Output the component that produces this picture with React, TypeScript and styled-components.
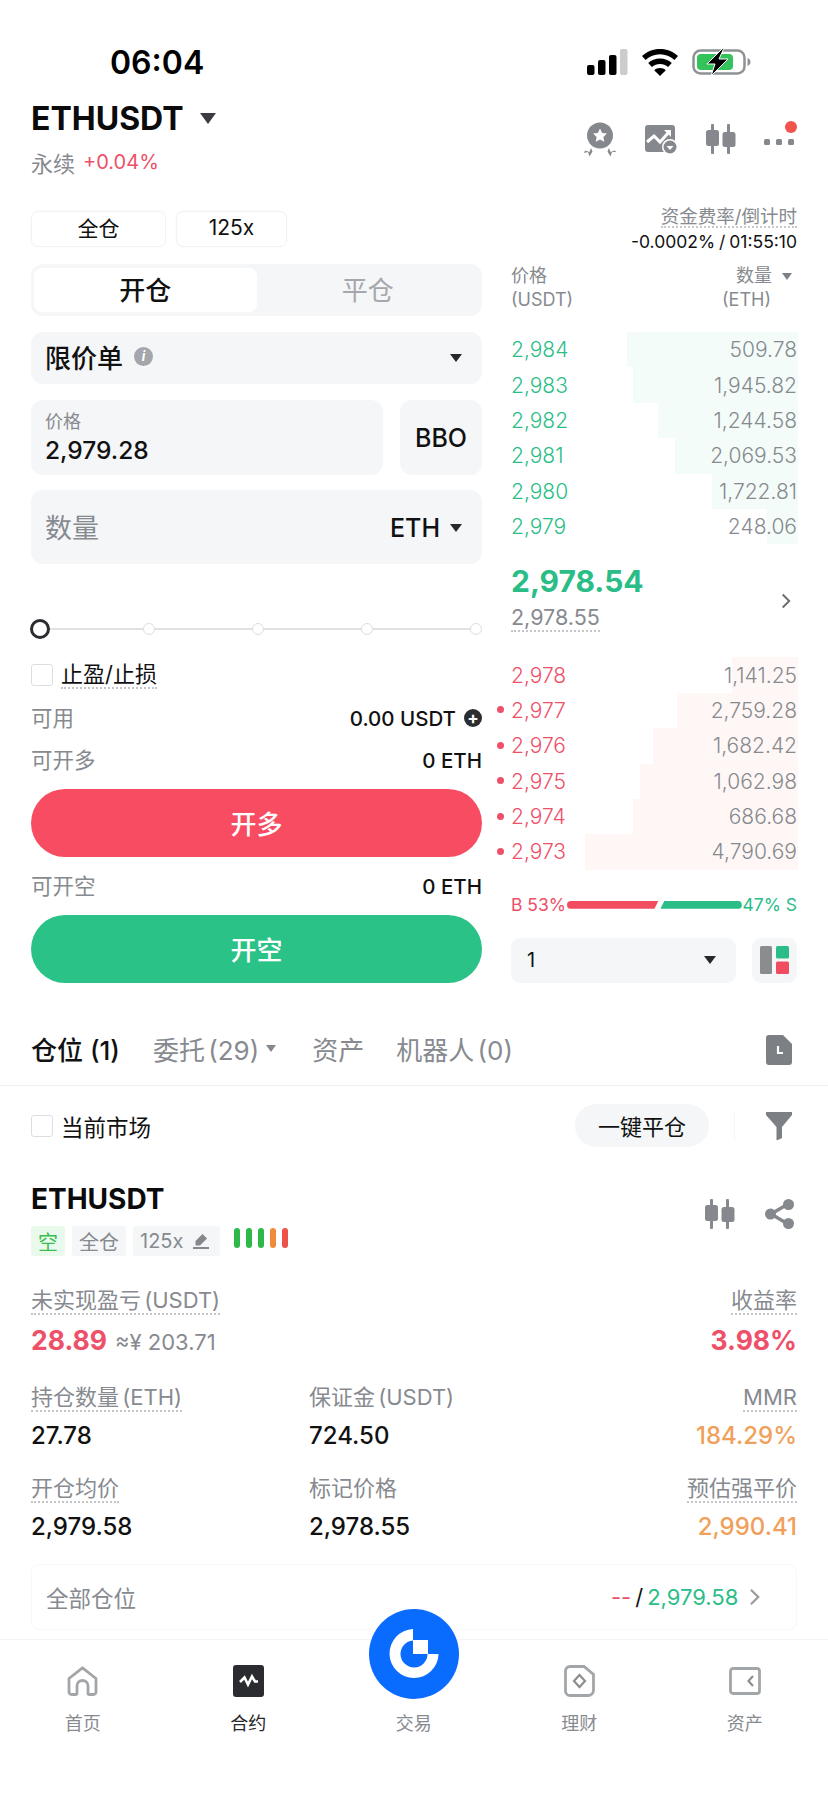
import React from 'react';
import styled, { createGlobalStyle } from 'styled-components';

const GREEN = '#2bbd87';
const RED = '#ee4f69';
const GREY = '#878a8f';
const FIELD = '#f4f6f8';
const ICON = '#85888c';

const GlobalStyle = createGlobalStyle`
  html, body {
    margin: 0;
    padding: 0;
    background: #fff;
  }
  body {
    font-family: Inter, "Noto Sans CJK SC", sans-serif;
    color: #111;
  }
  * { box-sizing: border-box; }
`;

const Page = styled.div`
  width: 828px;
  height: 1800px;
  padding: 0 31px;
  overflow: hidden;
`;

/* status bar */
const StatusBar = styled.div`
  display: flex;
  justify-content: space-between;
  align-items: center;
  height: 36px;
  margin: 44px -31px 0;
  padding: 0 76px 0 110px;
`;
const Time = styled.div`
  font-size: 32px;
  font-weight: 600;
  color: #000;
`;
const StatusIcons = styled.div`
  display: flex;
  align-items: center;
  gap: 14px;
`;

/* header */
const Header = styled.div`
  display: flex;
  justify-content: space-between;
  align-items: flex-start;
  margin-top: 16px;
`;
const TitleRow = styled.div`
  display: flex;
  align-items: center;
  gap: 16px;
  height: 44px;
`;
const Title = styled.div`
  font-size: 32px;
  font-weight: 700;
  color: #0b0b0b;
`;
const SubRow = styled.div`
  display: flex;
  align-items: center;
  gap: 8px;
  height: 28px;
  margin-top: 8px;
  font-size: 22px;
  color: ${GREY};
`;
const Change = styled.span`
  font-size: 20px;
  color: ${RED};
`;
const HeaderIcons = styled.div`
  display: flex;
  align-items: center;
  gap: 28px;
  margin-top: 25px;
  height: 36px;
`;

/* margin mode + funding */
const ControlRow = styled.div`
  display: flex;
  justify-content: space-between;
  align-items: center;
  height: 43px;
  margin-top: 31px;
`;
const Pills = styled.div`
  display: flex;
  gap: 10px;
`;
const Pill = styled.div<{ $w: number }>`
  width: ${p => p.$w}px;
  height: 36px;
  padding-bottom: 3px;
  display: flex;
  align-items: center;
  justify-content: center;
  font-size: 21px;
  border: 1px solid #f1f2f4;
  border-radius: 7px;
  box-shadow: 0 0 3px rgba(0, 0, 0, 0.03);
`;
const Funding = styled.div`
  text-align: right;
  font-size: 17.5px;
  line-height: 25px;
  word-spacing: -1px;
`;
const FundingLabel = styled.span`
  display: inline-block;
  font-size: 18.5px;
  line-height: 20px;
  color: ${GREY};
  border-bottom: 2px dotted #c6c8cb;
`;

/* two trade columns */
const Columns = styled.div`
  display: grid;
  grid-template-columns: 451px 286px;
  justify-content: space-between;
  margin-top: 14px;
`;
const LeftColumn = styled.div`
  display: flex;
  flex-direction: column;
`;
const RightColumn = styled.div`
  display: flex;
  flex-direction: column;
`;

const Segment = styled.div`
  display: grid;
  grid-template-columns: 1fr 1fr;
  height: 52px;
  padding: 4px 3px;
  background: ${FIELD};
  border-radius: 12px;
`;
const SegmentItem = styled.div<{ $active?: boolean }>`
  display: flex;
  align-items: center;
  justify-content: center;
  padding-bottom: 3px;
  font-size: 26px;
  font-weight: ${p => (p.$active ? 500 : 400)};
  color: ${p => (p.$active ? '#111' : '#a4a7ab')};
  background: ${p => (p.$active ? '#fff' : 'transparent')};
  border-radius: 8px;
`;
const Field = styled.div<{ $h: number; $mt: number }>`
  display: flex;
  align-items: center;
  justify-content: space-between;
  height: ${p => p.$h}px;
  margin-top: ${p => p.$mt}px;
  padding: 0 20px 0 14px;
  background: ${FIELD};
  border-radius: 12px;
`;
const FieldMain = styled.div`
  display: flex;
  align-items: center;
  gap: 11px;
  padding-bottom: 4px;
  font-size: 26px;
  font-weight: 500;
`;
const InfoDot = styled.span`
  width: 19px;
  height: 19px;
  display: flex;
  align-items: center;
  justify-content: center;
  border-radius: 50%;
  background: #a3a6aa;
  color: #fff;
  font-size: 13px;
  font-style: italic;
  font-weight: 700;
`;
const Caret = styled.span<{ $size?: number; $color?: string }>`
  display: inline-block;
  width: 0;
  height: 0;
  border-left: ${p => (p.$size ?? 12) / 2}px solid transparent;
  border-right: ${p => (p.$size ?? 12) / 2}px solid transparent;
  border-top: ${p => Math.round((p.$size ?? 12) * 0.66)}px solid ${p => p.$color ?? '#26282b'};
`;
const PriceRow = styled.div`
  display: grid;
  grid-template-columns: 352px 82px;
  justify-content: space-between;
  margin-top: 16px;
`;
const PriceField = styled.div`
  height: 75px;
  padding: 10px 14px 0;
  background: ${FIELD};
  border-radius: 12px;
`;
const PriceLabel = styled.div`
  font-size: 18px;
  line-height: 24px;
  color: ${GREY};
`;
const PriceValue = styled.div`
  font-size: 24.5px;
  font-weight: 500;
  line-height: 32px;
`;
const BboButton = styled.div`
  display: flex;
  align-items: center;
  justify-content: center;
  background: ${FIELD};
  border-radius: 12px;
  font-size: 25px;
  font-weight: 500;
`;
const QtyLabel = styled.div`
  padding-bottom: 2px;
  font-size: 27px;
  color: ${GREY};
`;
const QtyUnit = styled.div`
  display: flex;
  align-items: center;
  gap: 10px;
  padding-top: 2px;
  font-size: 25px;
  font-weight: 500;
`;

const Slider = styled.div`
  position: relative;
  display: flex;
  align-items: center;
  justify-content: space-between;
  height: 20px;
  margin-top: 55px;
  padding-left: 3px;
  &::before {
    content: '';
    position: absolute;
    left: 4px;
    right: 4px;
    top: 9px;
    height: 2px;
    background: #dfe1e3;
  }
`;
const SliderDot = styled.span<{ $on?: boolean }>`
  position: relative;
  width: ${p => (p.$on ? 20 : 12)}px;
  height: ${p => (p.$on ? 20 : 12)}px;
  margin: ${p => (p.$on ? '0 -4px' : 0)};
  border-radius: 50%;
  background: #fff;
  border: ${p => (p.$on ? '3px solid #2a2c2f' : '1.5px solid #dcdee0')};
`;

const CheckRow = styled.div<{ $mt?: number }>`
  display: flex;
  align-items: center;
  gap: 8px;
  height: 24px;
  margin-top: ${p => p.$mt ?? 0}px;
  font-size: 22px;
`;
const CheckBox = styled.span`
  width: 22px;
  height: 22px;
  border: 1.5px solid #dcdee1;
  border-radius: 3px;
  background: #fff;
`;
const DottedText = styled.span<{ $color?: string }>`
  display: inline-block;
  color: ${p => p.$color ?? 'inherit'};
  line-height: 26px;
  border-bottom: 2px dotted #c3c5c8;
`;
const InfoRow = styled.div<{ $mt: number }>`
  display: flex;
  align-items: center;
  justify-content: space-between;
  height: 30px;
  margin-top: ${p => p.$mt}px;
  font-size: 20.5px;
  font-weight: 500;
`;
const InfoLabel = styled.span`
  margin-bottom: 3px;
  font-size: 21.5px;
  font-weight: 400;
  color: ${GREY};
`;
const InfoValue = styled.span`
  display: flex;
  align-items: center;
  gap: 8px;
`;
const PlusDot = styled.span`
  width: 18px;
  height: 18px;
  display: flex;
  align-items: center;
  justify-content: center;
  border-radius: 50%;
  background: #2b2d30;
  color: #fff;
  font-size: 17px;
  line-height: 1;
  font-weight: 700;
`;
const TradeButton = styled.div<{ $bg: string }>`
  display: flex;
  align-items: center;
  justify-content: center;
  height: 68px;
  margin-top: 14px;
  padding-bottom: 2px;
  border-radius: 34px;
  background: ${p => p.$bg};
  color: #fff;
  font-size: 26px;
  font-weight: 500;
`;

/* order book */
const BookHeader = styled.div`
  display: flex;
  justify-content: space-between;
  height: 46px;
  margin-bottom: 22px;
  font-size: 18px;
  line-height: 24px;
  color: ${GREY};
`;
const BookHeadCol = styled.div<{ $right?: boolean }>`
  text-align: ${p => (p.$right ? 'right' : 'left')};
  padding-right: ${p => (p.$right ? '5px' : 0)};
`;
const BookHeadLine = styled.div`
  display: flex;
  align-items: center;
  justify-content: flex-end;
  gap: 10px;
`;
const BookUnit = styled.div`
  padding-right: 21px;
`;
const BookRows = styled.div`
  display: grid;
  grid-auto-rows: 35.4px;
`;
const BookRow = styled.div<{ $color: string }>`
  position: relative;
  display: flex;
  align-items: center;
  justify-content: space-between;
  font-size: 21px;
  font-weight: 300;
  color: ${p => p.$color};
`;
const DepthBar = styled.div<{ $bg: string }>`
  position: absolute;
  right: -1px;
  top: 0;
  bottom: 0;
  background: ${p => p.$bg};
`;
const BookCell = styled.span<{ $muted?: boolean }>`
  position: relative;
  color: ${p => (p.$muted ? GREY : 'inherit')};
`;
const OrderDot = styled.span`
  position: absolute;
  left: -14px;
  top: 50%;
  width: 7px;
  height: 7px;
  margin-top: -4px;
  border-radius: 50%;
  background: ${RED};
`;
const MidBlock = styled.div`
  display: flex;
  justify-content: space-between;
  align-items: flex-start;
  height: 113px;
  padding: 20px 6px 0 0;
`;
const MidPrice = styled.div`
  font-size: 30px;
  font-weight: 700;
  line-height: 34px;
  color: ${GREEN};
`;
const MidMark = styled.div`
  margin-top: 6px;
  font-size: 21.5px;
  color: ${GREY};
`;
const MidChevron = styled.div`
  margin-top: 29px;
`;
const Ratio = styled.div`
  display: flex;
  align-items: center;
  justify-content: space-between;
  height: 26px;
  margin-top: 22px;
  font-size: 17.5px;
`;
const RatioText = styled.span<{ $color: string }>`
  color: ${p => p.$color};
`;
const RatioBars = styled.div`
  display: flex;
  gap: 2px;
  width: 175px;
  height: 8px;
`;
const RatioBar = styled.div<{ $color: string; $side: 'b' | 's' }>`
  height: 8px;
  flex: ${p => (p.$side === 'b' ? 53 : 47)};
  background: ${p => p.$color};
  border-radius: ${p => (p.$side === 'b' ? '4px 0 0 4px' : '0 4px 4px 0')};
  clip-path: ${p =>
    p.$side === 'b'
      ? 'polygon(0 0, 100% 0, calc(100% - 4px) 100%, 0 100%)'
      : 'polygon(4px 0, 100% 0, 100% 100%, 0 100%)'};
`;
const BookFoot = styled.div`
  display: grid;
  grid-template-columns: 225px 45px;
  justify-content: space-between;
  height: 45px;
  margin-top: 20px;
`;
const StepSelect = styled.div`
  display: flex;
  align-items: center;
  justify-content: space-between;
  padding: 0 20px 0 16px;
  background: ${FIELD};
  border-radius: 9px;
  font-size: 20px;
`;
const LayoutButton = styled.div`
  display: flex;
  align-items: center;
  justify-content: center;
  background: ${FIELD};
  border-radius: 9px;
`;

/* positions */
const Tabs = styled.div`
  display: flex;
  align-items: flex-start;
  height: 59px;
  margin: 44px -31px 0;
  padding: 0 36px 0 31px;
  border-bottom: 1px solid #f0f1f3;
`;
const Tab = styled.div<{ $active?: boolean; $ml?: number }>`
  display: flex;
  align-items: center;
  gap: 7px;
  height: 46px;
  margin-left: ${p => p.$ml ?? 0}px;
  padding-bottom: 4px;
  font-size: 26px;
  word-spacing: ${p => (p.$active ? 0 : -4)}px;
  font-weight: ${p => (p.$active ? 500 : 400)};
  color: ${p => (p.$active ? '#111' : GREY)};
`;
const TabIcon = styled.div`
  margin-left: auto;
  display: flex;
  align-items: center;
  height: 46px;
`;
const FilterRow = styled.div`
  display: flex;
  align-items: center;
  height: 43px;
  margin-top: 18px;
`;
const MarketCheck = styled(CheckRow)`
  font-size: 22.5px;
`;
const CloseAll = styled.div`
  display: flex;
  align-items: center;
  justify-content: center;
  width: 134px;
  height: 43px;
  margin-left: auto;
  padding-bottom: 2px;
  border-radius: 22px;
  background: ${FIELD};
  font-size: 22px;
`;
const FilterIcon = styled.div`
  display: flex;
  margin: 0 5px 0 25px;
  padding-left: 31px;
  border-left: 1px solid #f4f5f6;
`;
const PositionHead = styled.div`
  display: flex;
  justify-content: space-between;
  align-items: center;
  margin-top: 34px;
`;
const PositionName = styled.div`
  font-size: 28px;
  font-weight: 700;
  line-height: 36px;
  color: #0b0b0b;
`;
const TagRow = styled.div`
  display: flex;
  align-items: center;
  gap: 7px;
  height: 30px;
  margin-top: 9px;
`;
const Tag = styled.div<{ $green?: boolean; $pr?: number }>`
  display: flex;
  align-items: center;
  gap: 10px;
  height: 30px;
  padding: 0 ${p => p.$pr ?? 7}px 0 7px;
  border-radius: 3px;
  font-size: 20px;
  background: ${p => (p.$green ? '#e9f9ec' : FIELD)};
  color: ${p => (p.$green ? '#3bbd4f' : GREY)};
`;
const RiskBars = styled.div`
  display: flex;
  gap: 6px;
  margin: -6px 0 0 7px;
`;
const RiskBar = styled.span<{ $color: string }>`
  width: 6px;
  height: 20px;
  border-radius: 3px;
  background: ${p => p.$color};
`;
const PositionIcons = styled.div`
  display: flex;
  align-items: center;
  gap: 30px;
  padding: 0 3px 10px 0;
`;
const DataGrid = styled.div`
  display: grid;
  grid-template-columns: 278px 1fr auto;
  row-gap: 25px;
  margin-top: 31px;
`;
const DataCell = styled.div<{ $right?: boolean }>`
  display: flex;
  flex-direction: column;
  align-items: ${p => (p.$right ? 'flex-end' : 'flex-start')};
`;
const DataLabel = styled.span`
  display: inline-block;
  height: 28px;
  line-height: 26px;
  font-size: 22px;
  word-spacing: -3px;
  color: ${GREY};
  border-bottom: 2px dotted #c3c5c8;
`;
const DataPlainLabel = styled(DataLabel)`
  border-bottom-color: transparent;
`;
const DataValue = styled.div<{ $color?: string; $big?: boolean }>`
  display: flex;
  align-items: baseline;
  gap: 8px;
  margin-top: ${p => (p.$big ? 8 : 10)}px;
  font-size: ${p => (p.$big ? 26.5 : 24)}px;
  font-weight: ${p => (p.$big ? 700 : 500)};
  line-height: ${p => (p.$big ? 34 : 28)}px;
  color: ${p => p.$color ?? '#111'};
`;
const DataNote = styled.span`
  font-size: 22px;
  font-weight: 400;
  color: ${GREY};
`;
const SummaryCard = styled.div`
  display: flex;
  align-items: center;
  justify-content: space-between;
  height: 66px;
  margin-top: 23px;
  padding: 0 35px 0 14px;
  border: 1px solid #f7f8f9;
  border-radius: 8px;
  font-size: 22.5px;
  color: ${GREY};
`;
const SummaryValue = styled.div`
  display: flex;
  align-items: center;
  gap: 4px;
  font-size: 22px;
  color: #111;
`;
const SummaryChevron = styled.span`
  display: flex;
  margin-left: 7px;
`;

/* bottom nav */
const BottomNav = styled.div`
  position: relative;
  display: grid;
  grid-template-columns: repeat(5, 165.5px);
  margin: 9px -31px 0;
  height: 162px;
  background: #fff;
  border-top: 1px solid #f3f4f5;
`;
const NavItem = styled.div<{ $active?: boolean }>`
  display: flex;
  flex-direction: column;
  align-items: center;
  padding-top: 25px;
  font-size: 18px;
  color: ${p => (p.$active ? '#26282b' : GREY)};
`;
const NavIcon = styled.div`
  height: 32px;
  display: flex;
  align-items: center;
`;
const NavLabel = styled.div`
  margin-top: 15px;
  line-height: 24px;
`;
const CenterLogo = styled.div`
  position: absolute;
  left: 50%;
  top: -31px;
  width: 90px;
  height: 90px;
  transform: translateX(-50%);
`;

const asks = [
  { p: '2,984', q: '509.78', w: 171 },
  { p: '2,983', q: '1,945.82', w: 165 },
  { p: '2,982', q: '1,244.58', w: 140 },
  { p: '2,981', q: '2,069.53', w: 123 },
  { p: '2,980', q: '1,722.81', w: 86 },
  { p: '2,979', q: '248.06', w: 31 },
];
const bids = [
  { p: '2,978', q: '1,141.25', w: 66, dot: false },
  { p: '2,977', q: '2,759.28', w: 121, dot: true },
  { p: '2,976', q: '1,682.42', w: 145, dot: true },
  { p: '2,975', q: '1,062.98', w: 158, dot: true },
  { p: '2,974', q: '686.68', w: 165, dot: true },
  { p: '2,973', q: '4,790.69', w: 213, dot: true },
];

const SignalIcon = () => (
  <svg width="41" height="26" viewBox="0 0 41 26">
    <rect x="0" y="16" width="7.5" height="10" rx="2" fill="#000" />
    <rect x="11" y="11" width="7.5" height="15" rx="2" fill="#000" />
    <rect x="22" y="6" width="7.5" height="20" rx="2" fill="#000" />
    <rect x="33" y="0" width="7.5" height="26" rx="2" fill="#ccc" />
  </svg>
);

const WifiIcon = () => (
  <svg width="36" height="27" viewBox="0 0 36 27">
    <path d="M18 0C11 0 5 2.6 0 7l3.6 4C7.6 7.4 12.6 5.3 18 5.3S28.4 7.4 32.4 11L36 7C31 2.6 25 0 18 0Z" fill="#000" />
    <path d="M18 9.5c-4.6 0-8.7 1.7-11.8 4.5l3.7 4c2.2-1.9 5-3.1 8.1-3.1s5.9 1.2 8.1 3.1l3.7-4C26.7 11.2 22.6 9.5 18 9.5Z" fill="#000" />
    <path d="M18 19c-2.3 0-4.3.8-5.8 2.2L18 27l5.8-5.8C22.3 19.8 20.3 19 18 19Z" fill="#000" />
  </svg>
);

const BatteryIcon = () => (
  <svg width="60" height="28" viewBox="0 0 60 28">
    <rect x="1.5" y="2.5" width="51" height="23" rx="7" fill="none" stroke="#8f9295" strokeWidth="2.5" />
    <path d="M55.5 10c2 .8 3 2.2 3 4s-1 3.2-3 4Z" fill="#8f9295" />
    <rect x="5" y="6" width="36" height="16" rx="4" fill="#34c35a" />
    <path d="M31 0 15 16h8l-4 12 17-17h-9l5-11Z" fill="#000" stroke="#fff" strokeWidth="1" />
  </svg>
);

const MedalIcon = () => (
  <svg width="34" height="35" viewBox="0 0 34 35">
    <circle cx="17" cy="13.5" r="13" fill={ICON} />
    <path d="M17 6.5l2.1 4.4 4.8.7-3.5 3.4.8 4.8-4.2-2.3-4.2 2.3.8-4.8-3.5-3.4 4.8-.7Z" fill="#fff" />
    <path d="M2 28.5 6.5 30l1.5-4 1.500 3.5-3 5-1.500-4.5L1 31Z" fill={ICON} />
    <path d="M32 28.5 27.5 30 26 26l-1.5 3.5 3 5 1.5-4.5 4 0Z" fill={ICON} />
  </svg>
);

const ChartIcon = () => (
  <svg width="33" height="33" viewBox="0 0 33 33">
    <rect x="0" y="2" width="30" height="27" rx="3" fill={ICON} />
    <path d="M2 19l7-6 6 6 9-10" fill="none" stroke="#fff" strokeWidth="3" />
    <path d="M19 7h7v7Z" fill="#fff" />
    <circle cx="25" cy="24" r="8" fill="#fff" />
    <circle cx="25" cy="24" r="6.5" fill={ICON} />
    <path d="M21.5 23h7L25 27Z" fill="#fff" />
  </svg>
);

const CandleIcon = () => (
  <svg width="30" height="30" viewBox="0 0 30 30">
    <rect x="5" y="0" width="3" height="30" rx="1" fill={ICON} />
    <rect x="0" y="6" width="13" height="16" rx="2.5" fill={ICON} />
    <rect x="21" y="0" width="3" height="30" rx="1" fill={ICON} />
    <rect x="16.5" y="8" width="13" height="15" rx="2.5" fill={ICON} />
  </svg>
);

const MoreIcon = () => (
  <svg width="33" height="36" viewBox="0 0 33 36">
    <rect x="0" y="18" width="6" height="6" rx="1.5" fill={ICON} />
    <rect x="12" y="18" width="6" height="6" rx="1.5" fill={ICON} />
    <rect x="24" y="18" width="6" height="6" rx="1.5" fill={ICON} />
    <circle cx="27" cy="6" r="6" fill="#f0544c" />
  </svg>
);

const Chevron = ({ color = '#6c6f73', h = 16 }: { color?: string; h?: number }) => (
  <svg width={h * 0.65} height={h} viewBox="0 0 10 16">
    <path d="M1.5 1.5 8 8l-6.5 6.5" fill="none" stroke={color} strokeWidth="2" />
  </svg>
);

const LayoutIcon = () => (
  <svg width="29" height="29" viewBox="0 0 29 29">
    <rect x="0" y="0" width="12" height="28" rx="1.5" fill="#8a8c90" />
    <rect x="16" y="0" width="13" height="12.5" rx="1.5" fill={GREEN} />
    <rect x="16" y="15.5" width="13" height="12.5" rx="1.5" fill="#f24c60" />
  </svg>
);

const DocClockIcon = () => (
  <svg width="26" height="30" viewBox="0 0 26 30">
    <path d="M3 0h14l9 9v18a3 3 0 0 1-3 3H3a3 3 0 0 1-3-3V3a3 3 0 0 1 3-3Z" fill="#7c7f83" />
    <path d="M12 11v7h5" fill="none" stroke="#fff" strokeWidth="2.2" />
  </svg>
);

const FunnelIcon = () => (
  <svg width="26" height="28" viewBox="0 0 26 28">
    <path d="M0 0H26V3L16 15V26L12 28H10.5V15L0 3Z" fill="#7c7f83" />
  </svg>
);

const ShareIcon = () => (
  <svg width="29" height="30" viewBox="0 0 29 30">
    <path d="M23 5 6 15l17 10" fill="none" stroke={ICON} strokeWidth="3.5" />
    <circle cx="23.5" cy="5.5" r="5.5" fill={ICON} />
    <circle cx="5.5" cy="15" r="5.5" fill={ICON} />
    <circle cx="23.5" cy="24.5" r="5.5" fill={ICON} />
  </svg>
);

const PenIcon = () => (
  <svg width="16" height="16" viewBox="0 0 16 16">
    <path d="M9.5 1 14 5.5 7 12.5H2.5V8Z" fill={ICON} />
    <rect x="0" y="14" width="16" height="2" fill={ICON} />
  </svg>
);

const HomeIcon = () => (
  <svg width="31" height="30" viewBox="0 0 31 30">
    <path
      d="M15.5 1.8 2 12.5V26a2.5 2.5 0 0 0 2.5 2.5h4.200c.8 0 1.300-.5 1.300-1.300V20a5.500 5.500 0 0 1 11 0v7.200c0 .8.500 1.300 1.300 1.300h4.200A2.500 2.500 0 0 0 29 26V12.500Z"
      fill="none"
      stroke="#a3a6a9"
      strokeWidth="2.8"
      strokeLinejoin="round"
    />
  </svg>
);

const ContractIcon = () => (
  <svg width="31" height="32" viewBox="0 0 31 32">
    <rect x="0" y="0" width="31" height="32" rx="3" fill="#2b2c30" />
    <path d="M7 17l4.5-4.5 3.5 7 4-8 3 5h3" fill="none" stroke="#fff" strokeWidth="2.6" />
  </svg>
);

const EarnIcon = () => (
  <svg width="31" height="32" viewBox="0 0 31 32">
    <path d="M6 1.5h14l9.5 8V25a5.5 5.5 0 0 1-5.5 5.5H6A4.5 4.5 0 0 1 1.5 26V6A4.5 4.5 0 0 1 6 1.5Z" fill="none" stroke="#a3a6a9" strokeWidth="2.8" />
    <path d="M15.5 10 21 16l-5.5 6L10 16Z" fill="none" stroke="#8c8f92" strokeWidth="2.2" />
  </svg>
);

const AssetsIcon = () => (
  <svg width="32" height="28" viewBox="0 0 32 28">
    <rect x="1.5" y="1.5" width="29" height="25" rx="2.5" fill="none" stroke="#a3a6a9" strokeWidth="2.8" />
    <path d="M24 9l-4.5 5 4.5 5" fill="none" stroke="#8c8f92" strokeWidth="2.2" />
  </svg>
);

const LogoIcon = () => (
  <svg width="90" height="90" viewBox="-45 -45 90 90">
    <circle cx="0" cy="0" r="45" fill="#0a6cff" />
    <path d="M-1-25A24.5 24.5 0 1 0 24.5 0H13.5A13.5 13.5 0 1 1-1-13.5Z" fill="#fff" />
    <rect x="-1" y="-14" width="15" height="14" fill="#fff" />
  </svg>
);

export default function App() {
  return (
    <Page>
      <GlobalStyle />
      <StatusBar>
        <Time>06:04</Time>
        <StatusIcons>
          <SignalIcon />
          <WifiIcon />
          <BatteryIcon />
        </StatusIcons>
      </StatusBar>

      <Header>
        <div>
          <TitleRow>
            <Title>ETHUSDT</Title>
            <Caret $size={16} $color="#3a3c3f" />
          </TitleRow>
          <SubRow>
            永续 <Change>+0.04%</Change>
          </SubRow>
        </div>
        <HeaderIcons>
          <MedalIcon />
          <ChartIcon />
          <CandleIcon />
          <MoreIcon />
        </HeaderIcons>
      </Header>

      <ControlRow>
        <Pills>
          <Pill $w={135}>全仓</Pill>
          <Pill $w={111}>125x</Pill>
        </Pills>
        <Funding>
          <FundingLabel>资金费率/倒计时</FundingLabel>
          <div>-0.0002% / 01:55:10</div>
        </Funding>
      </ControlRow>

      <Columns>
        <LeftColumn>
          <Segment>
            <SegmentItem $active>开仓</SegmentItem>
            <SegmentItem>平仓</SegmentItem>
          </Segment>
          <Field $h={52} $mt={16}>
            <FieldMain>
              限价单 <InfoDot>i</InfoDot>
            </FieldMain>
            <Caret />
          </Field>
          <PriceRow>
            <PriceField>
              <PriceLabel>价格</PriceLabel>
              <PriceValue>2,979.28</PriceValue>
            </PriceField>
            <BboButton>BBO</BboButton>
          </PriceRow>
          <Field $h={74} $mt={15}>
            <QtyLabel>数量</QtyLabel>
            <QtyUnit>
              ETH <Caret />
            </QtyUnit>
          </Field>
          <Slider>
            <SliderDot $on />
            <SliderDot />
            <SliderDot />
            <SliderDot />
            <SliderDot />
          </Slider>
          <CheckRow $mt={24}>
            <CheckBox />
            <DottedText>止盈/止损</DottedText>
          </CheckRow>
          <InfoRow $mt={16}>
            <InfoLabel>可用</InfoLabel>
            <InfoValue>
              0.00 USDT <PlusDot>+</PlusDot>
            </InfoValue>
          </InfoRow>
          <InfoRow $mt={12}>
            <InfoLabel>可开多</InfoLabel>
            <InfoValue>0 ETH</InfoValue>
          </InfoRow>
          <TradeButton $bg="#f74c61">开多</TradeButton>
          <InfoRow $mt={14}>
            <InfoLabel>可开空</InfoLabel>
            <InfoValue>0 ETH</InfoValue>
          </InfoRow>
          <TradeButton $bg="#2bc287">开空</TradeButton>
        </LeftColumn>

        <RightColumn>
          <BookHeader>
            <BookHeadCol>
              <div>价格</div>
              <div>(USDT)</div>
            </BookHeadCol>
            <BookHeadCol $right>
              <BookHeadLine>
                数量 <Caret $size={11} $color="#7d8084" />
              </BookHeadLine>
              <BookUnit>(ETH)</BookUnit>
            </BookHeadCol>
          </BookHeader>
          <BookRows>
            {asks.map(r => (
              <BookRow key={r.p} $color={GREEN}>
                <DepthBar $bg="#f3fcf9" style={{ width: r.w }} />
                <BookCell>{r.p}</BookCell>
                <BookCell $muted>{r.q}</BookCell>
              </BookRow>
            ))}
          </BookRows>
          <MidBlock>
            <div>
              <MidPrice>2,978.54</MidPrice>
              <MidMark>
                <DottedText>2,978.55</DottedText>
              </MidMark>
            </div>
            <MidChevron>
              <Chevron />
            </MidChevron>
          </MidBlock>
          <BookRows>
            {bids.map(r => (
              <BookRow key={r.p} $color={RED}>
                <DepthBar $bg="#fef7f5" style={{ width: r.w }} />
                <BookCell>
                  {r.dot && <OrderDot />}
                  {r.p}
                </BookCell>
                <BookCell $muted>{r.q}</BookCell>
              </BookRow>
            ))}
          </BookRows>
          <Ratio>
            <RatioText $color={RED}>B 53%</RatioText>
            <RatioBars>
              <RatioBar $side="b" $color="#f24c60" />
              <RatioBar $side="s" $color={GREEN} />
            </RatioBars>
            <RatioText $color={GREEN}>47% S</RatioText>
          </Ratio>
          <BookFoot>
            <StepSelect>
              1 <Caret />
            </StepSelect>
            <LayoutButton>
              <LayoutIcon />
            </LayoutButton>
          </BookFoot>
        </RightColumn>
      </Columns>

      <Tabs>
        <Tab $active>仓位 (1)</Tab>
        <Tab $ml={33}>
          委托 (29) <Caret $size={11} $color="#85888c" />
        </Tab>
        <Tab $ml={36}>资产</Tab>
        <Tab $ml={32}>机器人 (0)</Tab>
        <TabIcon>
          <DocClockIcon />
        </TabIcon>
      </Tabs>

      <FilterRow>
        <MarketCheck>
          <CheckBox />
          当前市场
        </MarketCheck>
        <CloseAll>一键平仓</CloseAll>
        <FilterIcon>
          <FunnelIcon />
        </FilterIcon>
      </FilterRow>

      <PositionHead>
        <div>
          <PositionName>ETHUSDT</PositionName>
          <TagRow>
            <Tag $green>空</Tag>
            <Tag>全仓</Tag>
            <Tag $pr={11}>
              125x <PenIcon />
            </Tag>
            <RiskBars>
              <RiskBar $color="#2fb84a" />
              <RiskBar $color="#2fb84a" />
              <RiskBar $color="#2fb84a" />
              <RiskBar $color="#ef8c3c" />
              <RiskBar $color="#ee5148" />
            </RiskBars>
          </TagRow>
        </div>
        <PositionIcons>
          <CandleIcon />
          <ShareIcon />
        </PositionIcons>
      </PositionHead>

      <DataGrid>
        <DataCell>
          <DataLabel>未实现盈亏 (USDT)</DataLabel>
          <DataValue $big $color={RED}>
            28.89 <DataNote>≈¥ 203.71</DataNote>
          </DataValue>
        </DataCell>
        <DataCell />
        <DataCell $right>
          <DataLabel>收益率</DataLabel>
          <DataValue $big $color={RED}>3.98%</DataValue>
        </DataCell>

        <DataCell>
          <DataLabel>持仓数量 (ETH)</DataLabel>
          <DataValue>27.78</DataValue>
        </DataCell>
        <DataCell>
          <DataPlainLabel>保证金 (USDT)</DataPlainLabel>
          <DataValue>724.50</DataValue>
        </DataCell>
        <DataCell $right>
          <DataLabel>MMR</DataLabel>
          <DataValue $color="#f0a05a">184.29%</DataValue>
        </DataCell>

        <DataCell>
          <DataLabel>开仓均价</DataLabel>
          <DataValue>2,979.58</DataValue>
        </DataCell>
        <DataCell>
          <DataPlainLabel>标记价格</DataPlainLabel>
          <DataValue>2,978.55</DataValue>
        </DataCell>
        <DataCell $right>
          <DataLabel>预估强平价</DataLabel>
          <DataValue $color="#f0a05a">2,990.41</DataValue>
        </DataCell>
      </DataGrid>

      <SummaryCard>
        全部仓位
        <SummaryValue>
          <RatioText $color={RED}>--</RatioText> / <RatioText $color={GREEN}>2,979.58</RatioText>
          <SummaryChevron>
            <Chevron color="#9a9da0" h={18} />
          </SummaryChevron>
        </SummaryValue>
      </SummaryCard>

      <BottomNav>
        <NavItem>
          <NavIcon>
            <HomeIcon />
          </NavIcon>
          <NavLabel>首页</NavLabel>
        </NavItem>
        <NavItem $active>
          <NavIcon>
            <ContractIcon />
          </NavIcon>
          <NavLabel>合约</NavLabel>
        </NavItem>
        <NavItem>
          <NavIcon />
          <NavLabel>交易</NavLabel>
        </NavItem>
        <NavItem>
          <NavIcon>
            <EarnIcon />
          </NavIcon>
          <NavLabel>理财</NavLabel>
        </NavItem>
        <NavItem>
          <NavIcon>
            <AssetsIcon />
          </NavIcon>
          <NavLabel>资产</NavLabel>
        </NavItem>
        <CenterLogo>
          <LogoIcon />
        </CenterLogo>
      </BottomNav>
    </Page>
  );
}
